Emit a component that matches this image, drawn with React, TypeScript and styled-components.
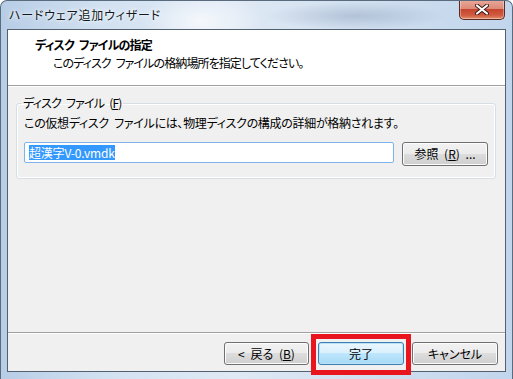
import React from "react";
import styled, { createGlobalStyle } from "styled-components";

const Global = createGlobalStyle`
  html, body { margin: 0; padding: 0; background: #ffffff; }
  body { font-family: "Noto Sans CJK JP", "Noto Sans", sans-serif; font-size: 12px; color: #000; }
  * { box-sizing: border-box; }
`;

const Window = styled.div`
  width: 513px;
  height: 379px;
  display: flex;
  flex-direction: column;
  border-radius: 7px 7px 0 0;
  border: 1px solid #5b6b7e;
  border-bottom: none;
  background:
    radial-gradient(ellipse 90px 14px at 355px 15px, rgba(120,140,170,0.35), rgba(120,140,170,0) 100%),
    radial-gradient(ellipse 60px 30px at 200px 20px, rgba(255,255,255,0.7), rgba(255,255,255,0) 100%),
    linear-gradient(to right, #b7cde6 0%, #d2e1f1 20%, #dfe9f5 45%, #cfdeef 75%, #c1d5ec 100%);
  font-feature-settings: "palt";
  word-spacing: 3px;
  overflow: hidden;
`;

const TitleBar = styled.div`
  height: 28px;
  display: flex;
  align-items: flex-start;
  justify-content: space-between;
  padding-left: 8px;
  flex-shrink: 0;
`;

const TitleText = styled.div`
  font-size: 12px;
  line-height: 16px;
  margin-top: 6px;
  letter-spacing: 0.8px;
  color: #101820;
  text-shadow: 0 0 6px #ffffff, 0 0 3px #ffffff;
`;

const CloseButton = styled.div`
  width: 46px;
  height: 20px;
  margin-right: 7px;
  margin-top: -1px;
  border: 1px solid #5a2a24;
  border-top: none;
  border-radius: 0 0 5px 5px;
  background: linear-gradient(to bottom, #e9a99b 0%, #dd8a78 45%, #c6452f 50%, #d05a3f 80%, #e3906d 100%);
  display: flex;
  align-items: center;
  justify-content: center;
  box-shadow: inset 0 0 0 1px rgba(255,255,255,0.35);
`;

const Client = styled.div`
  flex: 1;
  margin: 0 6px 7px 6px;
  border: 1px solid #52606f;
  background: #f0f0f0;
  display: flex;
  flex-direction: column;
`;

const Header = styled.div`
  height: 56px;
  background: #ffffff;
  border-bottom: 1px solid #a0a0a0;
  padding: 7px 0 0 27px;
  flex-shrink: 0;
`;

const HeaderTitle = styled.div`
  font-weight: bold;
  line-height: 16px;
  letter-spacing: -0.8px;
`;

const HeaderSub = styled.div`
  line-height: 16px;
  margin-top: 2px;
  padding-left: 18px;
  letter-spacing: -0.9px;
`;

const Body = styled.div`
  flex: 1;
  border-top: 1px solid #ffffff;
  padding: 8px 9px 0 8px;
`;

const Group = styled.fieldset`
  margin: 0;
  border: 1px solid #d5dfe5;
  border-radius: 3px;
  padding: 4px 7px 12px 7px;
  box-shadow: inset 0 0 0 1px #ffffff;
`;

const Legend = styled.legend`
  padding: 0 1px;
  margin-left: -2px;
  line-height: 16px;
  letter-spacing: -0.8px;
`;

const Mn = styled.span`
  text-decoration: underline;
`;

const Description = styled.div`
  line-height: 16px;
  letter-spacing: -0.3px;
`;

const FileRow = styled.div`
  display: flex;
  align-items: flex-start;
  gap: 8px;
  margin-top: 11px;
`;

const Input = styled.div`
  width: 370px;
  height: 21px;
  border: 1px solid #7eb4ea;
  border-radius: 2px;
  background: #ffffff;
  padding: 2px 0 0 4px;
  display: flex;
  align-items: flex-start;
`;

const Selection = styled.span`
  background: #3399ff;
  color: #ffffff;
  line-height: 15px;
  height: 15px;
  letter-spacing: -0.2px;
`;

const Button = styled.div<{ $primary?: boolean; $w: number; $h?: number }>`
  width: ${(p) => p.$w}px;
  height: ${(p) => p.$h ?? 23}px;
  border: 1px solid ${(p) => (p.$primary ? "#3c7fb1" : "#707070")};
  border-radius: 3px;
  background: ${(p) =>
    p.$primary
      ? "linear-gradient(to bottom, #eaf6fd 0%, #d9f0fc 50%, #bee6fd 50%, #a7d9f5 100%)"
      : "linear-gradient(to bottom, #f2f2f2 0%, #ebebeb 50%, #dddddd 50%, #cfcfcf 100%)"};
  box-shadow: inset 0 0 0 1px ${(p) => (p.$primary ? "#b9e2f9" : "#fcfcfc")};
  display: flex;
  align-items: center;
  justify-content: center;
  line-height: 16px;
  flex-shrink: 0;
  white-space: pre;
`;

const Footer = styled.div`
  border-top: 1px solid #a0a0a0;
  box-shadow: inset 0 1px 0 #ffffff;
  display: flex;
  justify-content: flex-end;
  align-items: flex-start;
  gap: 8px;
  padding: 9px 7px 7px 0;
  height: 39px;
  flex-shrink: 0;
`;

const Highlight = styled.div`
  position: relative;
  margin-left: 1px;
  &::after {
    content: "";
    position: absolute;
    left: -7px;
    right: -7px;
    top: -8px;
    bottom: -10px;
    border: 5px solid #e8141e;
    pointer-events: none;
  }
`;

export default function App() {
  return (
    <>
      <Global />
      <Window>
        <TitleBar>
          <TitleText>ハードウェア追加ウィザード</TitleText>
          <CloseButton>
            <svg width="14" height="11" viewBox="0 0 14 11">
              <path d="M2 1.5 L12 9.5 M12 1.5 L2 9.5" stroke="#3b1a14" strokeWidth="4" strokeLinecap="round" />
              <path d="M2 1.5 L12 9.5 M12 1.5 L2 9.5" stroke="#ffffff" strokeWidth="2.2" strokeLinecap="round" />
            </svg>
          </CloseButton>
        </TitleBar>
        <Client>
          <Header>
            <HeaderTitle>ディスク ファイルの指定</HeaderTitle>
            <HeaderSub>このディスク ファイルの格納場所を指定してください。</HeaderSub>
          </Header>
          <Body>
            <Group>
              <Legend>
                ディスク ファイル (<Mn>F</Mn>)
              </Legend>
              <Description>
                この仮想ディスク ファイルには、物理ディスクの構成の詳細が格納されます。
              </Description>
              <FileRow>
                <Input>
                  <Selection>超漢字V-0.vmdk</Selection>
                </Input>
                <Button $w={86} $h={24}>
                  参照 (<Mn>R</Mn>) ...
                </Button>
              </FileRow>
            </Group>
          </Body>
          <Footer>
            <Button $w={85}>
              &lt; 戻る (<Mn>B</Mn>)
            </Button>
            <Highlight>
              <Button $w={86} $primary>
                完了
              </Button>
            </Highlight>
            <Button $w={86}>キャンセル</Button>
          </Footer>
        </Client>
      </Window>
    </>
  );
}
